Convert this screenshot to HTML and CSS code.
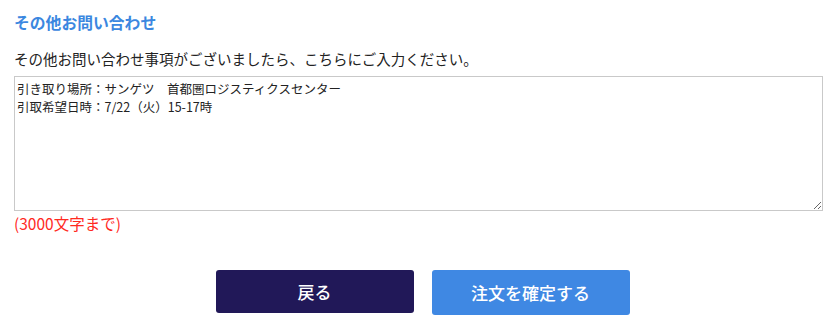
FILE: index.html
```html
<!DOCTYPE html>
<html lang="ja">
<head>
<meta charset="utf-8">
<title>その他お問い合わせ</title>
<link rel="stylesheet" href="styles.css">
</head>
<body>
<div class="page">
  <h2 class="title">その他お問い合わせ</h2>
  <p class="lead">その他お問い合わせ事項がございましたら、こちらにご入力ください。</p>
  <textarea class="memo">引き取り場所：サンゲツ　首都圏ロジスティクスセンター
引取希望日時：7/22（火）15-17時</textarea>
  <p class="note">(3000文字まで)</p>
  <div class="actions">
    <button class="btn btn-back" type="button">戻る</button>
    <button class="btn btn-submit" type="button">注文を確定する</button>
  </div>
</div>
</body>
</html>
```
FILE: styles.css
```css
html, body {
  margin: 0;
  padding: 0;
  background: #ffffff;
}
body {
  font-family: "Noto Sans CJK JP", "Noto Sans", sans-serif;
  color: #222222;
}
.page {
  padding: 11px 15px 0 14px;
}
.title {
  margin: 0;
  font-size: 15.8px;
  line-height: 24px;
  font-weight: 700;
  color: #3b87e0;
}
.lead {
  margin: 13px 0 0;
  font-size: 14.5px;
  line-height: 22px;
  color: #222222;
}
.memo {
  display: block;
  box-sizing: border-box;
  width: 100%;
  height: 135px;
  margin: 6px 0 0;
  padding: 3px 2px;
  border: 1px solid #c9c9c9;
  font-family: "Noto Sans CJK JP", "Noto Sans", sans-serif;
  font-size: 12.5px;
  line-height: 18px;
  color: #222222;
  background: #ffffff;
}
.note {
  margin: 2px 0 0;
  font-size: 15.5px;
  line-height: 20px;
  color: #ff2a1f;
}
.actions {
  display: flex;
  justify-content: center;
  align-items: flex-start;
  gap: 18px;
  margin-top: 37px;
  padding-left: 8px;
}
.btn {
  width: 198px;
  height: 43px;
  border: none;
  border-radius: 3px;
  font-family: "Noto Sans CJK JP", "Noto Sans", sans-serif;
  font-size: 17px;
  font-weight: 500;
  color: #ffffff;
  padding: 0;
  cursor: pointer;
}
.btn-back {
  background: #211858;
}
.btn-submit {
  height: 45px;
  background: #3f88e3;
}
```
